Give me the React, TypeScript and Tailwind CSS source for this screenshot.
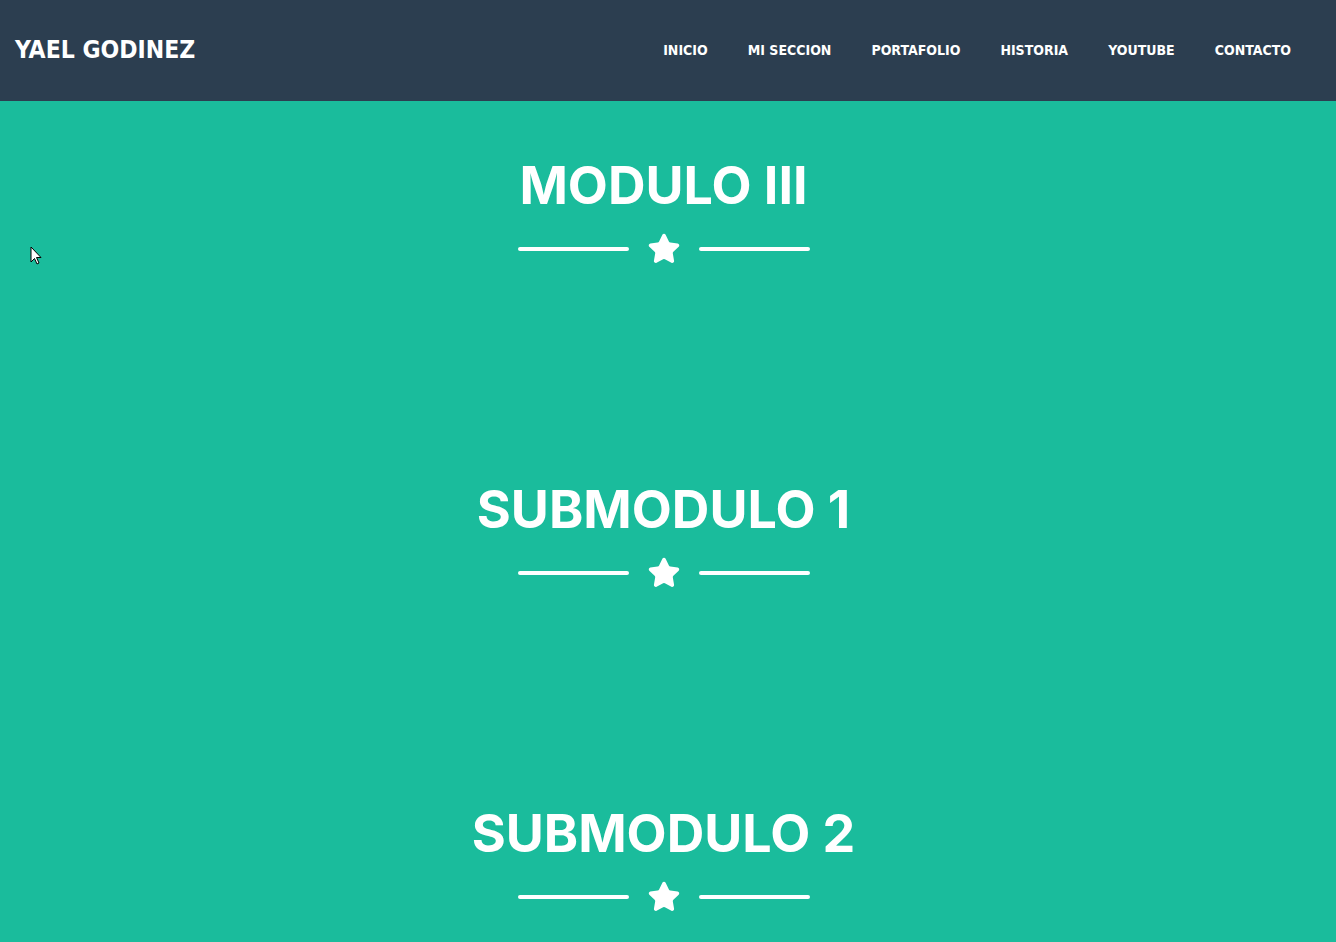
import { Star } from 'lucide-react';

const links = ['INICIO', 'MI SECCION', 'PORTAFOLIO', 'HISTORIA', 'YOUTUBE', 'CONTACTO'];
const sections = ['MODULO III', 'SUBMODULO 1', 'SUBMODULO 2'];

function Divider() {
  return (
    <div className="flex items-center justify-center gap-[18px] mt-[14px] h-[33px]">
      <div className="w-[111px] h-[4px] rounded-full bg-white" />
      <Star size={34} className="text-white fill-white" strokeWidth={1.5} strokeLinejoin="round" />
      <div className="w-[111px] h-[4px] rounded-full bg-white" />
    </div>
  );
}

export default function App() {
  return (
    <div className="min-h-[942px] bg-[#1abc9c] relative overflow-hidden pr-[9px]">
      <nav className="-mr-[9px] h-[101px] bg-[#2c3e50] flex items-center justify-between pl-[15px] pr-[45px] font-['DejaVu_Sans_Condensed','DejaVu_Sans',sans-serif] font-stretch-condensed text-white">
        <div className="text-[24.5px] font-bold">YAEL GODINEZ</div>
        <ul className="flex items-center gap-[40px]">
          {links.map((l) => (
            <li key={l} className="text-[14px] font-bold">{l}</li>
          ))}
        </ul>
      </nav>
      {sections.map((s) => (
        <section key={s} className="pt-[52px] pb-[160px] text-center text-white">
          <h2 className="text-[52px] leading-[65px] font-bold font-['Inter','Open_Sans',sans-serif]">{s}</h2>
          <Divider />
        </section>
      ))}
      <svg className="absolute left-[30px] top-[246px]" width="12" height="19" viewBox="0 0 12 19">
        <path d="M1 1 L1 16 L4.5 12.5 L7 18 L9 17 L6.5 11.5 L11 11.5 Z" fill="white" stroke="black" strokeWidth="1" strokeLinejoin="round" />
      </svg>
    </div>
  );
}
